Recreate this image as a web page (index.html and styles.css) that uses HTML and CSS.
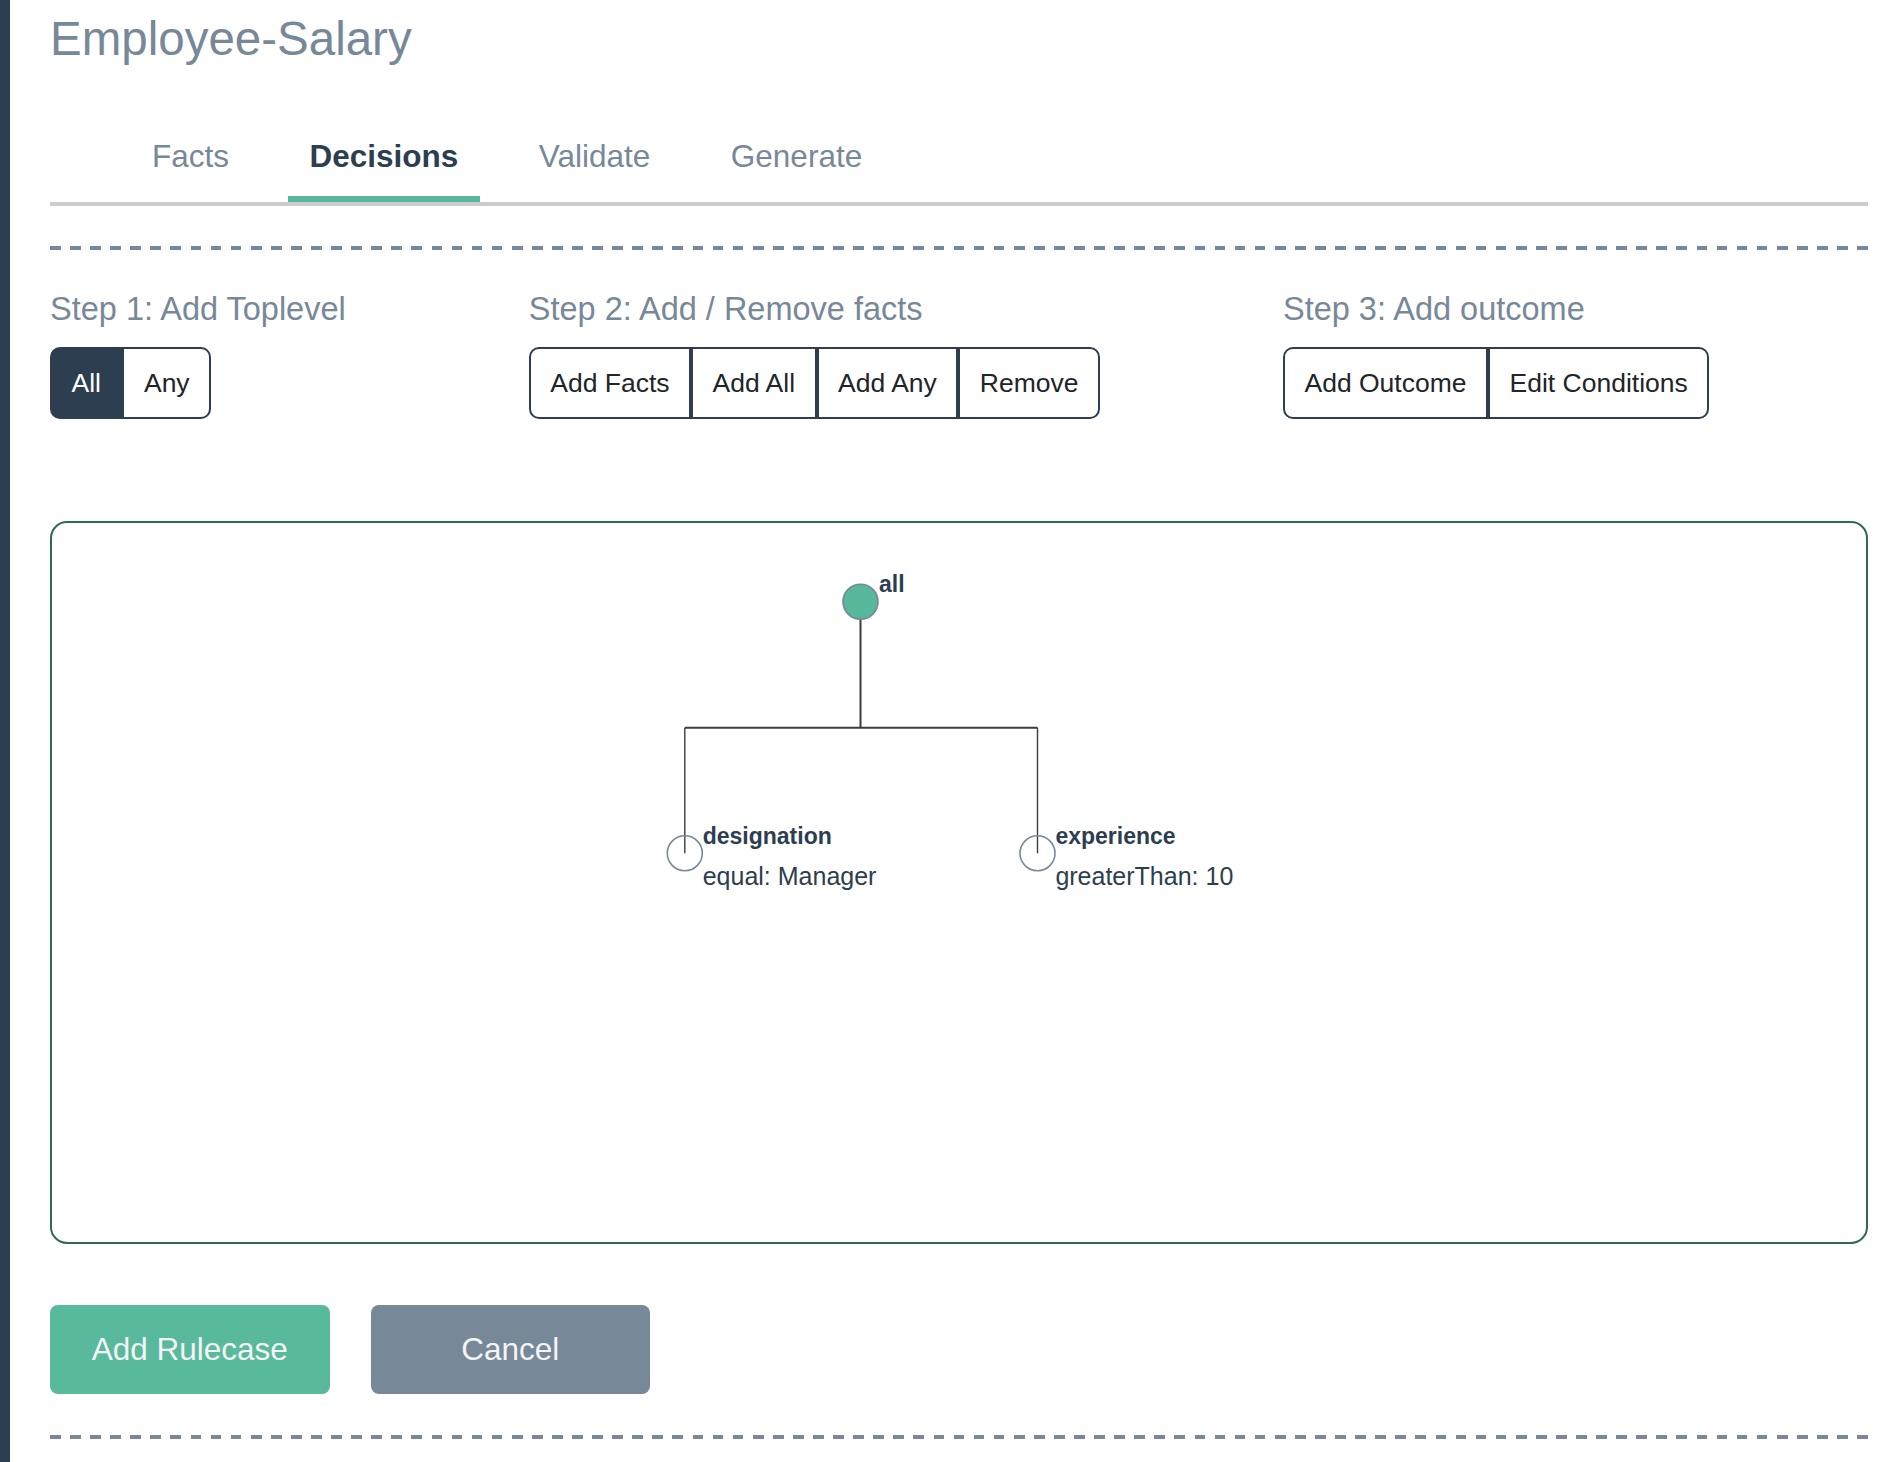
FILE: index.html
```html
<!DOCTYPE html>
<html lang="en">
<head>
<meta charset="utf-8">
<title>Employee-Salary</title>
<link rel="stylesheet" href="styles.css">
</head>
<body>
<div class="page">
  <h1 class="title">Employee-Salary</h1>
  <nav class="tabs">
    <a class="tab">Facts</a>
    <a class="tab active">Decisions</a>
    <a class="tab">Validate</a>
    <a class="tab">Generate</a>
  </nav>
  <div class="dash dash-top"></div>
  <section class="steps">
    <div class="step">
      <h2 class="step-label">Step 1: Add Toplevel</h2>
      <div class="btn-group">
        <button class="seg active">All</button>
        <button class="seg">Any</button>
      </div>
    </div>
    <div class="step">
      <h2 class="step-label">Step 2: Add / Remove facts</h2>
      <div class="btn-group">
        <button class="seg">Add Facts</button>
        <button class="seg">Add All</button>
        <button class="seg">Add Any</button>
        <button class="seg">Remove</button>
      </div>
    </div>
    <div class="step">
      <h2 class="step-label">Step 3: Add outcome</h2>
      <div class="btn-group">
        <button class="seg">Add Outcome</button>
        <button class="seg">Edit Conditions</button>
      </div>
    </div>
  </section>
  <div class="tree-box">
    <svg class="tree" viewBox="0 0 1814 719" xmlns="http://www.w3.org/2000/svg">
      <path class="link link-main" d="M808.5 78.7 V204.7 M632.8 204.7 H985.5"/>
      <path class="link link-child" d="M632.8 204.7 V330.3 M985.5 204.7 V330.3"/>
      <circle class="node node-root" cx="808.5" cy="78.7" r="17.5"/>
      <circle class="node node-leaf" cx="632.8" cy="330.3" r="17.5"/>
      <circle class="node node-leaf" cx="985.5" cy="330.3" r="17.5"/>
      <text class="node-name" x="827" y="69">all</text>
      <text class="node-name" x="650.7" y="321">designation</text>
      <text class="node-detail" x="650.7" y="362">equal: Manager</text>
      <text class="node-name" x="1003.4" y="321">experience</text>
      <text class="node-detail" x="1003.4" y="362">greaterThan: 10</text>
    </svg>
  </div>
  <div class="actions">
    <button class="btn btn-primary">Add Rulecase</button>
    <button class="btn btn-secondary">Cancel</button>
  </div>
  <div class="dash dash-bottom"></div>
</div>
</body>
</html>
```
FILE: styles.css
```css
html, body {
  margin: 0;
  padding: 0;
  background: #ffffff;
}

body {
  font-family: "Liberation Sans", Arial, Helvetica, sans-serif;
}

.page {
  min-height: 100vh;
  box-sizing: border-box;
  border-left: 10px solid #2c3e50;
  padding: 0 30px 0 40px;
}

.title {
  margin: 0;
  padding-top: 10.5px;
  font-size: 47.5px;
  line-height: 56px;
  font-weight: 400;
  color: #778899;
}

.tabs {
  display: flex;
  gap: 37.5px;
  margin-top: 70.5px;
  padding-left: 80.5px;
  border-bottom: 4px solid #cccccc;
}

.tab {
  padding: 0 21.5px 21px;
  font-size: 31.5px;
  line-height: 38px;
  color: #778899;
  border-bottom: 6px solid transparent;
}

.tab.active {
  font-weight: 700;
  color: #2c3e50;
  border-bottom-color: #57b89c;
}

.dash {
  height: 4px;
  background: repeating-linear-gradient(90deg, #778899 0 10.7px, transparent 10.7px 20.08px);
}

.dash-top {
  margin-top: 40px;
}

.steps {
  display: flex;
  gap: 183px;
  margin-top: 39.6px;
}

.step {
  display: flex;
  flex-direction: column;
  align-items: flex-start;
}

.step-label {
  margin: 0 0 19.4px;
  font-size: 32.5px;
  line-height: 38px;
  font-weight: 400;
  color: #778899;
}

.btn-group {
  display: flex;
}

.seg {
  height: 72px;
  margin: 0;
  padding: 0 19.5px;
  border: 2px solid #2c3e50;
  border-radius: 0;
  background: #ffffff;
  color: #212529;
  font-family: inherit;
  font-size: 26.5px;
  line-height: 1;
  cursor: pointer;
}

.seg:first-child {
  border-radius: 10px 0 0 10px;
}

.seg:last-child {
  border-radius: 0 10px 10px 0;
}

.seg.active {
  background: #2c3e50;
  color: #ffffff;
}

.tree-box {
  margin-top: 102px;
  height: 723px;
  box-sizing: border-box;
  border: 2px solid #2e6b50;
  border-radius: 17px;
}

.tree {
  display: block;
  width: 100%;
  height: 100%;
}

.link {
  fill: none;
  stroke: #3d3d3d;
}

.link-main {
  stroke-width: 2;
}

.link-child {
  stroke-width: 1.4;
}

.node {
  stroke: #778899;
  stroke-width: 1.6;
}

.node-root {
  fill: #57b89c;
}

.node-leaf {
  fill: none;
}

.node-name {
  font-family: "Liberation Sans", Arial, Helvetica, sans-serif;
  font-size: 23px;
  font-weight: 700;
  fill: #2c3e50;
}

.node-detail {
  font-family: "Liberation Sans", Arial, Helvetica, sans-serif;
  font-size: 25px;
  fill: #2c3e50;
}

.actions {
  display: flex;
  gap: 41px;
  margin-top: 61px;
}

.btn {
  width: 279.5px;
  height: 89px;
  border: 0;
  border-radius: 8px;
  font-family: inherit;
  font-size: 31.5px;
  color: #f4f4f4;
  cursor: pointer;
}

.btn-primary {
  background: #58b99c;
}

.btn-secondary {
  background: #778899;
}

.dash-bottom {
  margin-top: 41px;
}
```
